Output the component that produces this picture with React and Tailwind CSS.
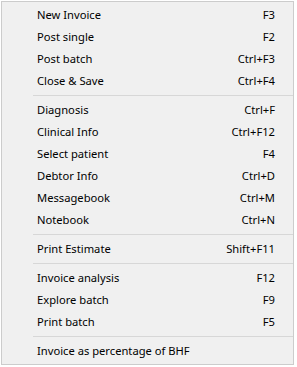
import React from 'react';

// Einträge des Kontextmenüs, null = Trennlinie
const items = [
    ['New Invoice', 'F3'],
    ['Post single', 'F2'],
    ['Post batch', 'Ctrl+F3'],
    ['Close & Save', 'Ctrl+F4'],
    null,
    ['Diagnosis', 'Ctrl+F'],
    ['Clinical Info', 'Ctrl+F12'],
    ['Select patient', 'F4'],
    ['Debtor Info', 'Ctrl+D'],
    ['Messagebook', 'Ctrl+M'],
    ['Notebook', 'Ctrl+N'],
    null,
    ['Print Estimate', 'Shift+F11'],
    null,
    ['Invoice analysis', 'F12'],
    ['Explore batch', 'F9'],
    ['Print batch', 'F5'],
    null,
    ['Invoice as percentage of BHF', ''],
];

const App = () => {
    return (
        <div className="w-[297px] h-[367px] bg-white pt-px pl-px">
            <div
                className="w-[293px] h-[364px] bg-[#f0f0f0] border border-[#cccccc] pt-[2px] text-[11.2px] text-black"
                style={{ fontFamily: '"Noto Sans", "Open Sans", sans-serif' }}
            >
                {items.map((item, i) =>
                    item === null ? (
                        <div key={i} className="h-[7px] flex items-center pl-[31px]">
                            <div className="w-full h-px bg-[#d7d7d7]"></div>
                        </div>
                    ) : (
                        <div key={i} className="h-[22px] flex items-center justify-between pl-[35px] pr-[18px] leading-none">
                            <span>{item[0]}</span>
                            <span>{item[1]}</span>
                        </div>
                    )
                )}
            </div>
        </div>
    );
};

export default App;
